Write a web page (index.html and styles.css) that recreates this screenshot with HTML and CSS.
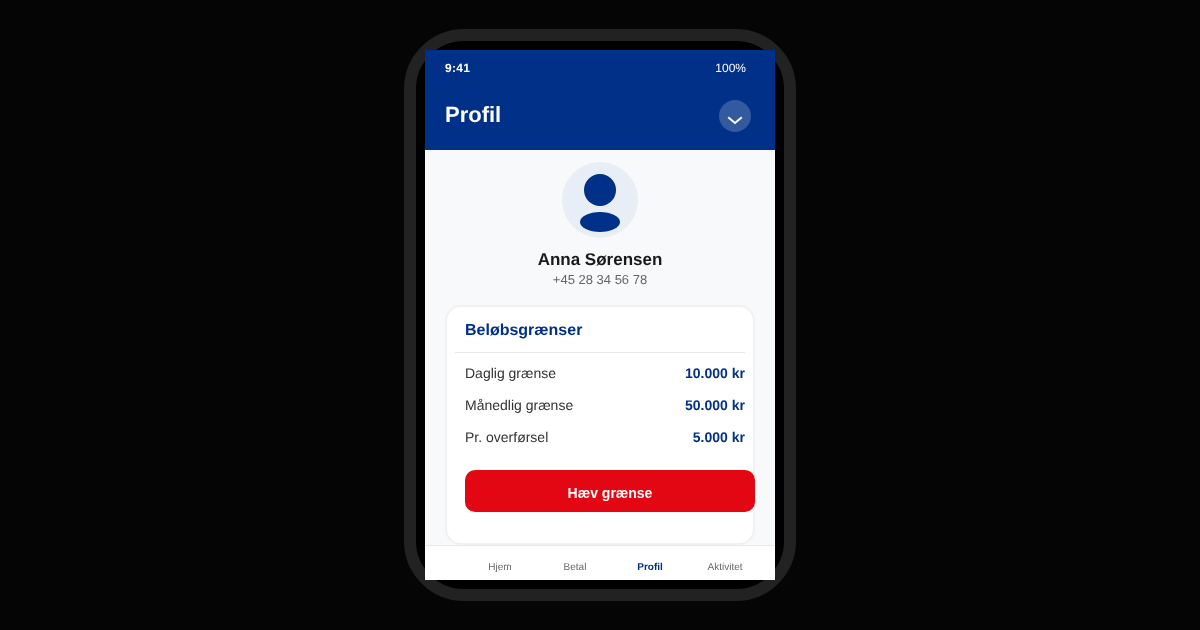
FILE: index.html
```html
<!DOCTYPE html>
<html>
<head>
  <link rel="stylesheet" href="styles.css">
</head>
<body>
  <div class="phone">
    <div class="screen">
      <div class="header">
        <div class="status-bar">
          <span class="time">9:41</span>
          <span class="battery">100%</span>
        </div>
        <div class="title-row">
          <h1>Profil</h1>
          <div class="round-btn">
            <svg width="16" height="10" viewBox="0 0 16 10"><path d="M1.2 2.3 L8 8 L14.8 2.3" fill="none" stroke="#fff" stroke-width="2"/></svg>
          </div>
        </div>
      </div>

      <div class="content">
        <div class="avatar">
          <div class="avatar-head"></div>
          <div class="avatar-body"></div>
        </div>
        <div class="name">Anna Sørensen</div>
        <div class="phone-number">+45 28 34 56 78</div>

        <div class="card">
          <h2>Beløbsgrænser</h2>
          <div class="divider"></div>
          <div class="limit-row"><span>Daglig grænse</span><strong>10.000 kr</strong></div>
          <div class="limit-row"><span>Månedlig grænse</span><strong>50.000 kr</strong></div>
          <div class="limit-row"><span>Pr. overførsel</span><strong>5.000 kr</strong></div>
          <button class="raise-btn">Hæv grænse</button>
        </div>
      </div>

      <div class="tab-bar">
        <span class="tab">Hjem</span>
        <span class="tab">Betal</span>
        <span class="tab active">Profil</span>
        <span class="tab">Aktivitet</span>
      </div>
    </div>
  </div>
</body>
</html>
```

FILE: styles.css
```css
html, body {
  margin: 0;
  padding: 0;
  height: 630px;
  overflow: hidden;
  background-color: #050505;
  font-family: "Liberation Sans", Arial, sans-serif;
  text-rendering: geometricPrecision;
}

body {
  display: flex;
  justify-content: center;
  padding-top: 29px;
  box-sizing: border-box;
}

.phone {
  box-sizing: border-box;
  width: 392px;
  height: 572px;
  padding: 9px;
  background-color: #000;
  border: 12px solid #222;
  border-radius: 60px;
  will-change: transform;
}

.screen {
  display: flex;
  flex-direction: column;
  height: 530px;
  background-color: #f8f9fb;
}

/* Blue top area */
.header {
  box-sizing: border-box;
  height: 100px;
  flex-shrink: 0;
  padding: 0 24px 0 20px;
  background-color: #003087;
  color: #fff;
}

.status-bar {
  display: flex;
  justify-content: space-between;
  align-items: center;
  height: 36px;
  padding-right: 5px;
  font-size: 12px;
}

.time {
  font-weight: bold;
  letter-spacing: 0.3px;
}

.title-row {
  display: flex;
  justify-content: space-between;
  align-items: flex-start;
  margin-top: 14px;
}

.title-row h1 {
  margin: 0;
  font-size: 22px;
  line-height: 30px;
}

.round-btn {
  display: flex;
  align-items: center;
  justify-content: center;
  width: 32px;
  height: 32px;
  padding-top: 8px;
  box-sizing: border-box;
  border-radius: 50%;
  background-color: rgba(255, 255, 255, 0.2);
}

/* Profile part */
.content {
  flex: 1;
  min-height: 0;
  overflow: hidden;
  display: flex;
  flex-direction: column;
  align-items: center;
  padding: 12px 20px 0;
}

.avatar {
  display: flex;
  flex-direction: column;
  align-items: center;
  box-sizing: border-box;
  flex-shrink: 0;
  width: 76px;
  height: 76px;
  padding-top: 12px;
  border-radius: 50%;
  background-color: #e8eef6;
}

.avatar-head {
  width: 32px;
  height: 32px;
  border-radius: 50%;
  background-color: #003087;
}

.avatar-body {
  width: 40px;
  height: 20px;
  margin-top: 6px;
  border-radius: 50%;
  background-color: #003087;
}

.name {
  margin-top: 12px;
  font-size: 17px;
  line-height: 20px;
  font-weight: bold;
  color: #1a1a1a;
}

.phone-number {
  margin-top: 2px;
  font-size: 13px;
  line-height: 16px;
  color: #666;
}

.card {
  box-sizing: border-box;
  flex-shrink: 0;
  width: 310px;
  height: 240px;
  margin-top: 17px;
  padding: 0 8px;
  background-color: #fff;
  border: 2px solid #eff1f5;
  border-radius: 16px;
}

.card h2 {
  margin: 0;
  padding: 14px 0 0 10px;
  height: 31px;
  font-size: 16px;
  line-height: 20px;
  color: #003087;
}

.divider {
  height: 1px;
  margin-bottom: 4px;
  background-color: #e5e7eb;
}

.limit-row {
  display: flex;
  justify-content: space-between;
  align-items: center;
  height: 32px;
  padding-left: 10px;
  font-size: 14px;
  color: #333;
}

.limit-row strong {
  color: #003087;
}

.raise-btn {
  display: block;
  width: 290px;
  height: 42px;
  margin: 17px 0 0 10px;
  padding: 4px 0 0;
  border: none;
  border-radius: 10px;
  background-color: #e30613;
  color: #fff;
  font-family: inherit;
  font-size: 14px;
  font-weight: bold;
}

/* Bottom tabs */
.tab-bar {
  position: relative;
  box-sizing: border-box;
  display: flex;
  flex-shrink: 0;
  height: 35px;
  padding: 0 12.5px 0 37.5px;
  background-color: #fff;
  border-top: 1px solid #e5e7eb;
}

.tab {
  flex: 1;
  padding-top: 16px;
  font-size: 10px;
  line-height: 12px;
  text-align: center;
  color: #666;
}

.tab.active {
  font-weight: bold;
  color: #003087;
}
```
